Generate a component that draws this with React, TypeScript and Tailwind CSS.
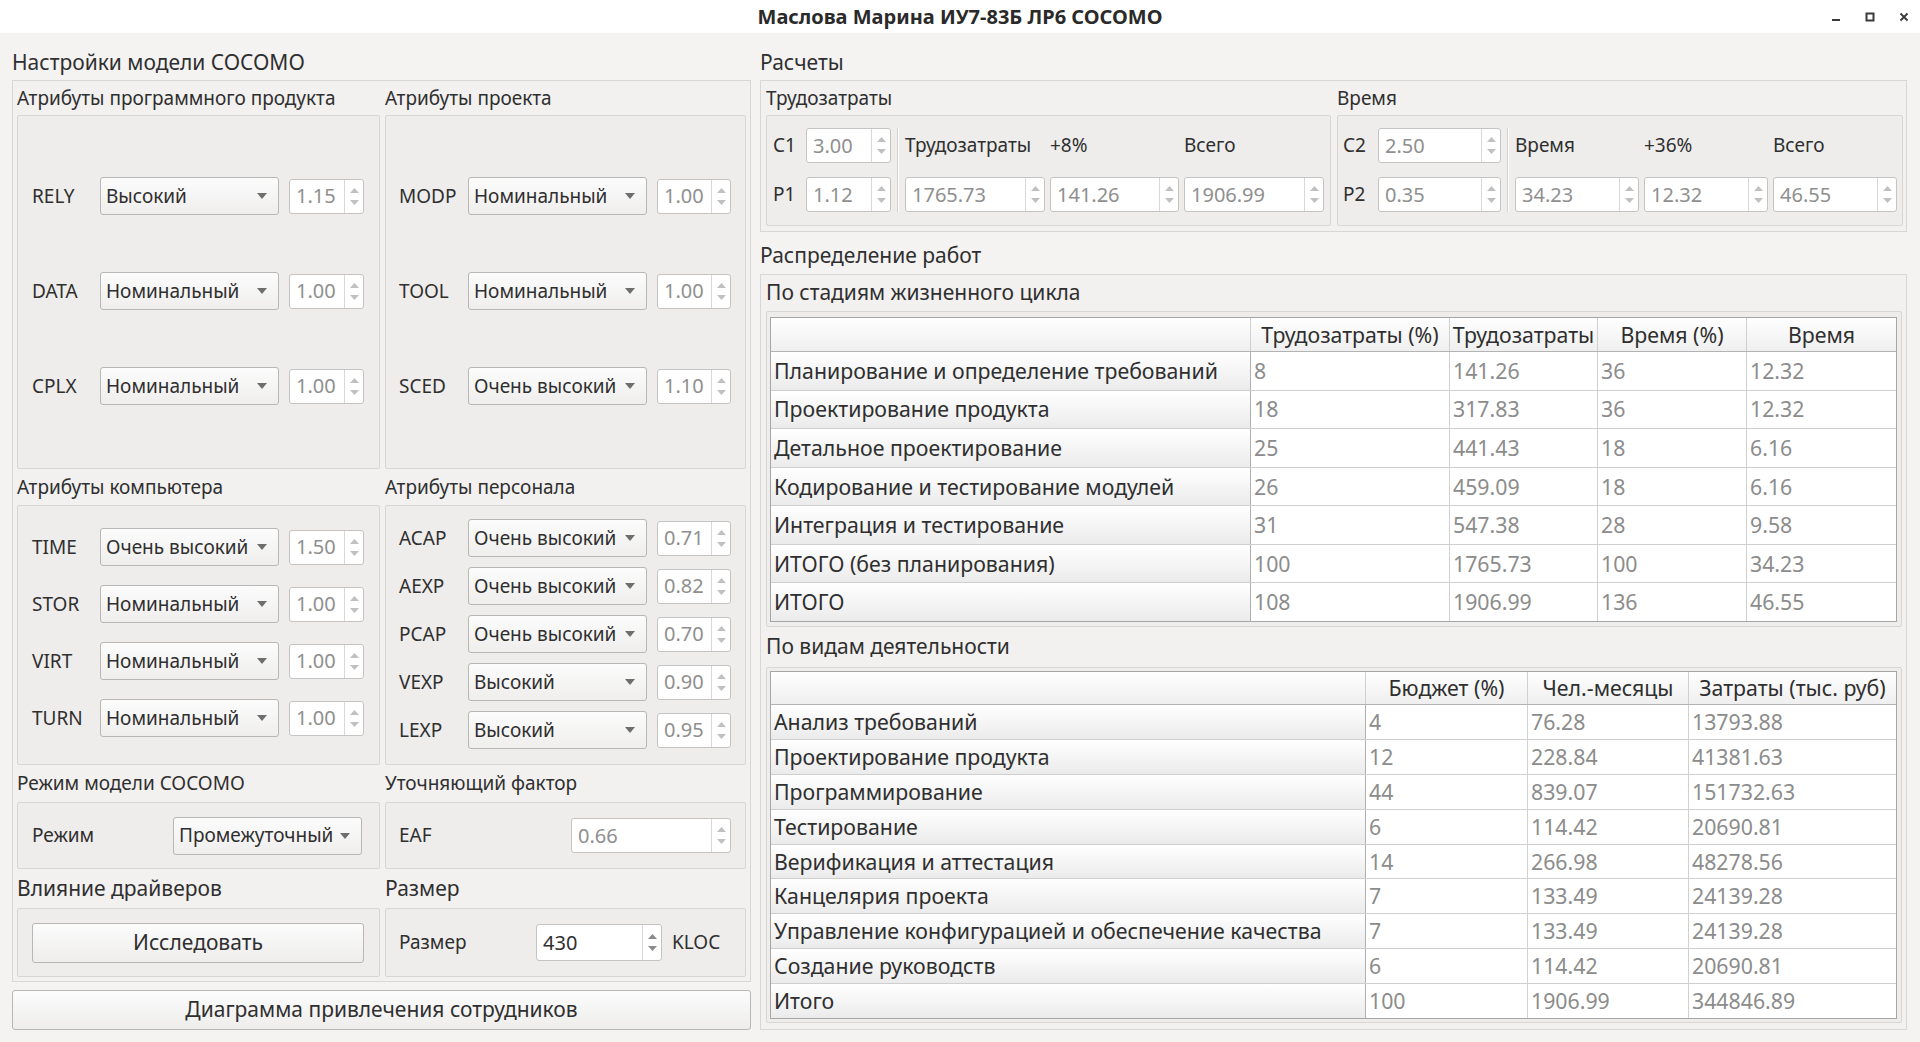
import React from 'react'

// small triangle used by spin boxes and combo boxes
function Arrow({ up, color, w = 9, h = 5 }: { up?: boolean; color: string; w?: number; h?: number }) {
    return (
        <svg width={w} height={h} viewBox={`0 0 ${w} ${h}`}>
            <path d={up ? `M0 ${h} L${w / 2} 0 L${w} ${h} Z` : `M0 0 L${w / 2} ${h} L${w} 0 Z`} fill={color} />
        </svg>
    )
}

function Spin({ value, w, h = 'h-[35px]', enabled = false }: { value: string; w: string; h?: string; enabled?: boolean }) {
    const c = enabled ? '#8a8a8a' : '#c0c0c0'
    return (
        <div className={`flex ${w} ${h} shrink-0 rounded-[3px] border border-[#c6c4c2] bg-white`}>
            <div className={`flex min-w-0 flex-1 items-center pl-[6px] text-[20px] ${enabled ? 'text-[#2f2f2f]' : 'text-[#8f8f8f]'}`}>
                {value}
            </div>
            <div className="flex w-[19px] flex-col items-center justify-center gap-[7px] border-l border-[#dad8d6]">
                <Arrow up color={c} />
                <Arrow color={c} />
            </div>
        </div>
    )
}

function Combo({ text, w }: { text: string; w: string }) {
    return (
        <div className={`flex ${w} h-[38px] shrink-0 items-center justify-between rounded-[3px] border border-[#b9b7b5] bg-linear-to-b from-[#fcfcfc] to-[#efeeed] pl-[5px] pr-[11px] text-[19px] text-[#2f2f2f]`}>
            <span className="whitespace-nowrap">{text}</span>
            <Arrow color="#6e6e6e" w={10} h={6} />
        </div>
    )
}

function Button({ children, className }: { children: React.ReactNode; className: string }) {
    return (
        <div className={`flex items-center justify-center rounded-[3px] border border-[#b9b7b5] bg-linear-to-b from-[#fcfcfc] to-[#eeedec] text-[21px] text-[#2f2f2f] ${className}`}>
            {children}
        </div>
    )
}

function Section({ title, titleH, titleSize = 'text-[19px]', w, boxH, boxClass = '', children }: {
    title: string
    titleH: string
    titleSize?: string
    w: string
    boxH: string
    boxClass?: string
    children?: React.ReactNode
}) {
    return (
        <div className={`flex ${w} flex-col`}>
            <div className={`flex ${titleH} items-center ${titleSize}`}>{title}</div>
            <div className={`${boxH} rounded-[2px] border border-[#d8d6d4] bg-[#eeedec] ${boxClass}`}>{children}</div>
        </div>
    )
}

function AttrRow({ name, value, num, labelW, spinW }: { name: string; value: string; num: string; labelW: string; spinW: string }) {
    return (
        <div className="flex h-[38px] items-center">
            <span className={`${labelW} text-[19px]`}>{name}</span>
            <Combo text={value} w="w-[179px]" />
            <div className="ml-[10px]">
                <Spin value={num} w={spinW} />
            </div>
        </div>
    )
}

function Table({ head, widths, rows, h, headH }: {
    head: string[]
    widths: string[]
    rows: string[][]
    h: string
    headH: string
}) {
    return (
        <div className={`flex ${h} flex-col border border-[#a6a6a6] bg-white text-[21.3px]`}>
            <div className={`flex ${headH} shrink-0 border-b border-[#b3b3b3] bg-linear-to-b from-white to-[#efefef]`}>
                {head.map((t, i) => (
                    <div
                        key={i}
                        className={`${widths[i]} flex items-center justify-center whitespace-nowrap border-r border-[#d0d0d0] text-[#2f2f2f] last:border-r-0`}
                    >
                        {t}
                    </div>
                ))}
            </div>
            {rows.map((r, ri) => (
                <div key={ri} className="flex min-h-0 flex-1 border-b border-[#cfcfcf] last:border-b-0">
                    {r.map((t, i) =>
                        i === 0 ? (
                            <div
                                key={i}
                                className={`${widths[i]} flex items-center whitespace-nowrap border-r border-[#b0b0b0] bg-linear-to-b from-white to-[#ebebeb] pl-[3px] text-[#2f2f2f]`}
                            >
                                {t}
                            </div>
                        ) : (
                            <div
                                key={i}
                                className={`${widths[i]} flex items-center border-r border-[#d0d0d0] pl-[3px] text-[#8c8c8c] last:border-r-0`}
                            >
                                {t}
                            </div>
                        ),
                    )}
                </div>
            ))}
        </div>
    )
}

const stages = [
    ['Планирование и определение требований', '8', '141.26', '36', '12.32'],
    ['Проектирование продукта', '18', '317.83', '36', '12.32'],
    ['Детальное проектирование', '25', '441.43', '18', '6.16'],
    ['Кодирование и тестирование модулей', '26', '459.09', '18', '6.16'],
    ['Интеграция и тестирование', '31', '547.38', '28', '9.58'],
    ['ИТОГО (без планирования)', '100', '1765.73', '100', '34.23'],
    ['ИТОГО', '108', '1906.99', '136', '46.55'],
]

const activities = [
    ['Анализ требований', '4', '76.28', '13793.88'],
    ['Проектирование продукта', '12', '228.84', '41381.63'],
    ['Программирование', '44', '839.07', '151732.63'],
    ['Тестирование', '6', '114.42', '20690.81'],
    ['Верификация и аттестация', '14', '266.98', '48278.56'],
    ['Канцелярия проекта', '7', '133.49', '24139.28'],
    ['Управление конфигурацией и обеспечение качества', '7', '133.49', '24139.28'],
    ['Создание руководств', '6', '114.42', '20690.81'],
    ['Итого', '100', '1906.99', '344846.89'],
]

function TitleBar() {
    return (
        <div className="relative flex h-[33px] shrink-0 items-center justify-center bg-white">
            <span className="text-[20px] font-bold text-[#2a2a2a]">Маслова Марина ИУ7-83Б ЛР6 COCOMO</span>
            <div className="absolute right-[11px] top-0 flex h-[33px] items-center gap-[24px]">
                <svg width="10" height="10" viewBox="0 0 10 10">
                    <rect x="1" y="7" width="8" height="2" fill="#3a3a3a" />
                </svg>
                <svg width="10" height="10" viewBox="0 0 10 10">
                    <rect x="1.5" y="1.5" width="7" height="7" fill="none" stroke="#3a3a3a" strokeWidth="2" />
                </svg>
                <svg width="10" height="10" viewBox="0 0 10 10">
                    <path d="M1.5 1.5 L8.5 8.5 M8.5 1.5 L1.5 8.5" stroke="#3a3a3a" strokeWidth="1.8" />
                </svg>
            </div>
        </div>
    )
}

function LeftPanel() {
    return (
        <div className="flex w-[739px] flex-col">
            <div className="flex h-[47px] items-center pt-[12px] text-[21px]">Настройки модели COCOMO</div>
            <div className="h-[902px] border border-[#d9d7d5] bg-[#f2f1f0] px-[4px]">
                <div className="flex gap-[5px]">
                    <Section title="Атрибуты программного продукта" titleH="h-[34px]" w="w-[363px]" boxH="h-[354px]" boxClass="flex flex-col gap-[57px] pl-[14px] pt-[61px]">
                        <AttrRow name="RELY" value="Высокий" num="1.15" labelW="w-[68px]" spinW="w-[75px]" />
                        <AttrRow name="DATA" value="Номинальный" num="1.00" labelW="w-[68px]" spinW="w-[75px]" />
                        <AttrRow name="CPLX" value="Номинальный" num="1.00" labelW="w-[68px]" spinW="w-[75px]" />
                    </Section>
                    <Section title="Атрибуты проекта" titleH="h-[34px]" w="w-[361px]" boxH="h-[354px]" boxClass="flex flex-col gap-[57px] pl-[13px] pt-[61px]">
                        <AttrRow name="MODP" value="Номинальный" num="1.00" labelW="w-[69px]" spinW="w-[74px]" />
                        <AttrRow name="TOOL" value="Номинальный" num="1.00" labelW="w-[69px]" spinW="w-[74px]" />
                        <AttrRow name="SCED" value="Очень высокий" num="1.10" labelW="w-[69px]" spinW="w-[74px]" />
                    </Section>
                </div>
                <div className="flex gap-[5px]">
                    <Section title="Атрибуты компьютера" titleH="h-[36px]" w="w-[363px]" boxH="h-[260px]" boxClass="flex flex-col gap-[19px] pl-[14px] pt-[22px]">
                        <AttrRow name="TIME" value="Очень высокий" num="1.50" labelW="w-[68px]" spinW="w-[75px]" />
                        <AttrRow name="STOR" value="Номинальный" num="1.00" labelW="w-[68px]" spinW="w-[75px]" />
                        <AttrRow name="VIRT" value="Номинальный" num="1.00" labelW="w-[68px]" spinW="w-[75px]" />
                        <AttrRow name="TURN" value="Номинальный" num="1.00" labelW="w-[68px]" spinW="w-[75px]" />
                    </Section>
                    <Section title="Атрибуты персонала" titleH="h-[36px]" w="w-[361px]" boxH="h-[260px]" boxClass="flex flex-col gap-[10px] pl-[13px] pt-[13px]">
                        <AttrRow name="ACAP" value="Очень высокий" num="0.71" labelW="w-[69px]" spinW="w-[74px]" />
                        <AttrRow name="AEXP" value="Очень высокий" num="0.82" labelW="w-[69px]" spinW="w-[74px]" />
                        <AttrRow name="PCAP" value="Очень высокий" num="0.70" labelW="w-[69px]" spinW="w-[74px]" />
                        <AttrRow name="VEXP" value="Высокий" num="0.90" labelW="w-[69px]" spinW="w-[74px]" />
                        <AttrRow name="LEXP" value="Высокий" num="0.95" labelW="w-[69px]" spinW="w-[74px]" />
                    </Section>
                </div>
                <div className="flex gap-[5px]">
                    <Section title="Режим модели COCOMO" titleH="h-[37px]" w="w-[363px]" boxH="h-[67px]" boxClass="flex items-center pl-[14px]">
                        <span className="w-[141px] text-[19px]">Режим</span>
                        <Combo text="Промежуточный" w="w-[189px]" />
                    </Section>
                    <Section title="Уточняющий фактор" titleH="h-[37px]" w="w-[361px]" boxH="h-[67px]" boxClass="flex items-center pl-[13px]">
                        <span className="w-[172px] text-[19px]">EAF</span>
                        <Spin value="0.66" w="w-[160px]" />
                    </Section>
                </div>
                <div className="flex gap-[5px]">
                    <Section title="Влияние драйверов" titleH="h-[39px]" titleSize="text-[21px]" w="w-[363px]" boxH="h-[69px]" boxClass="flex items-center pl-[14px]">
                        <Button className="h-[40px] w-[332px]">Исследовать</Button>
                    </Section>
                    <Section title="Размер" titleH="h-[39px]" titleSize="text-[21px]" w="w-[361px]" boxH="h-[69px]" boxClass="flex items-center pl-[13px]">
                        <span className="w-[137px] text-[19px]">Размер</span>
                        <Spin value="430" w="w-[126px]" h="h-[37px]" enabled />
                        <span className="ml-[10px] text-[19px]">KLOC</span>
                    </Section>
                </div>
            </div>
            <Button className="mt-[8px] h-[40px]">Диаграмма привлечения сотрудников</Button>
        </div>
    )
}

function CalcBox({ c, p, labels, cols, labelW, spinW, grid, boxW, pl }: {
    c: [string, string]
    p: [string, string]
    labels: string[]
    cols: string[]
    labelW: string
    spinW: string
    grid: string
    boxW: string
    pl: string
}) {
    return (
        <div className={`flex h-[111px] ${boxW} items-start rounded-[2px] border border-[#d8d6d4] bg-[#eeedec] ${pl} pt-[12px]`}>
            <div className="flex flex-col gap-[14px]">
                {[c, p].map(([l, v]) => (
                    <div key={l} className="flex h-[35px] items-center">
                        <span className={`${labelW} text-[19px]`}>{l}</span>
                        <Spin value={v} w={spinW} />
                    </div>
                ))}
            </div>
            <div className="mx-[6px] flex h-[84px]">
                <div className="w-px bg-[#d2d0ce]" />
                <div className="w-px bg-white" />
            </div>
            <div className={`grid ${grid} content-start gap-x-[5px] gap-y-[14px]`}>
                {labels.map((l) => (
                    <div key={l} className="flex h-[35px] items-center text-[19px]">
                        {l}
                    </div>
                ))}
                {cols.map((v, i) => (
                    <Spin key={i} value={v} w="w-full" />
                ))}
            </div>
        </div>
    )
}

function RightPanel() {
    return (
        <div className="flex w-[1147px] flex-col">
            <div className="flex h-[47px] items-center pt-[12px] text-[21px]">Расчеты</div>
            <div className="h-[152px] border border-[#d9d7d5] bg-[#f2f1f0] pl-[5px] pr-[3px]">
                <div className="flex gap-[6px]">
                    <div className="flex flex-col">
                        <div className="flex h-[34px] items-center text-[19px]">Трудозатраты</div>
                        <CalcBox
                            c={['C1', '3.00']}
                            p={['P1', '1.12']}
                            labels={['Трудозатраты', '+8%', 'Всего']}
                            cols={['1765.73', '141.26', '1906.99']}
                            labelW="w-[33px]"
                            spinW="w-[85px]"
                            grid="grid-cols-[140px_129px_140px]"
                            boxW="w-[565px]"
                            pl="pl-[6px]"
                        />
                    </div>
                    <div className="flex flex-col">
                        <div className="flex h-[34px] items-center text-[19px]">Время</div>
                        <CalcBox
                            c={['C2', '2.50']}
                            p={['P2', '0.35']}
                            labels={['Время', '+36%', 'Всего']}
                            cols={['34.23', '12.32', '46.55']}
                            labelW="w-[35px]"
                            spinW="w-[123px]"
                            grid="grid-cols-[124px_124px_124px]"
                            boxW="w-[566px]"
                            pl="pl-[5px]"
                        />
                    </div>
                </div>
            </div>
            <div className="flex h-[42px] items-center pt-[6px] text-[21px]">Распределение работ</div>
            <div className="h-[756px] border border-[#d9d7d5] bg-[#f2f1f0] pl-[5px] pr-[4px]">
                <div className="flex h-[36px] items-center text-[21px]">По стадиям жизненного цикла</div>
                <div className="h-[316px] rounded-[2px] border border-[#d8d6d4] bg-[#eeedec] pl-[3px] pr-[4px] pt-[5px]">
                    <Table
                        h="h-[305px]"
                        headH="h-[34px]"
                        head={['', 'Трудозатраты (%)', 'Трудозатраты', 'Время (%)', 'Время']}
                        widths={['w-[480px]', 'w-[199px]', 'w-[148px]', 'w-[149px]', 'flex-1']}
                        rows={stages}
                    />
                </div>
                <div className="flex h-[40px] items-center text-[21px]">По видам деятельности</div>
                <div className="h-[356px] rounded-[2px] border border-[#d8d6d4] bg-[#eeedec] pl-[3px] pr-[4px] pt-[3px]">
                    <Table
                        h="h-[348px]"
                        headH="h-[33px]"
                        head={['', 'Бюджет (%)', 'Чел.-месяцы', 'Затраты (тыс. руб)']}
                        widths={['w-[595px]', 'w-[162px]', 'w-[161px]', 'flex-1']}
                        rows={activities}
                    />
                </div>
            </div>
        </div>
    )
}

export default function App() {
    return (
        <div className="flex h-[1042px] w-[1920px] flex-col overflow-hidden bg-[#f4f3f2] font-['Noto_Sans',sans-serif] text-[#2f2f2f]">
            <TitleBar />
            <div className="flex gap-[9px] pl-[12px] pr-[13px]">
                <LeftPanel />
                <RightPanel />
            </div>
        </div>
    )
}
